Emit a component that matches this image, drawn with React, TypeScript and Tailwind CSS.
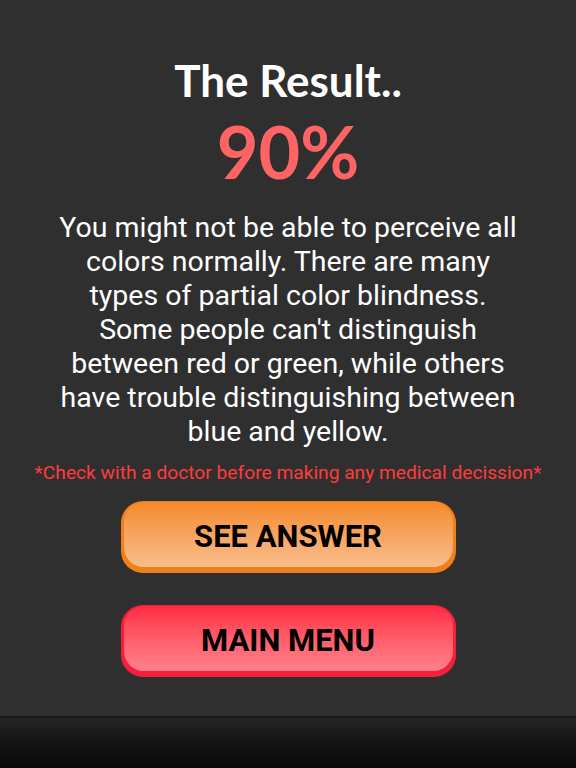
import React from "react";

const lines = [
  "You might not be able to perceive all",
  "colors normally. There are many",
  "types of partial color blindness.",
  "Some people can't distinguish",
  "between red or green, while others",
  "have trouble distinguishing between",
  "blue and yellow.",
];

export default function App() {
  return (
    <div className="w-[576px] h-[768px] flex flex-col bg-[#2f2f2f] overflow-hidden">
      <div className="flex-1 flex flex-col items-center">
        <h1
          className="mt-[54px] text-[44px] leading-[52px] font-bold text-white"
          style={{ fontFamily: "Lato, sans-serif" }}
        >
          The Result..
        </h1>
        <div
          className="mt-[5px] text-[72px] leading-[80px] font-bold text-[#ff6464]"
          style={{ fontFamily: "Lato, sans-serif" }}
        >
          90%
        </div>
        <p
          className="mt-[20px] flex flex-col items-center text-center text-[28.5px] leading-[34px] text-white"
          style={{ fontFamily: "Roboto, sans-serif" }}
        >
          {lines.map((l) => (
            <span key={l} className="whitespace-nowrap">
              {l}
            </span>
          ))}
        </p>
        <p
          className="mt-[12px] text-[19.2px] leading-[24px] text-[#ff3b3b] whitespace-nowrap"
          style={{ fontFamily: "Roboto, sans-serif" }}
        >
          *Check with a doctor before making any medical decission*
        </p>
        <div className="mt-[16px] w-[335px] h-[72px] rounded-[22px] bg-[#ef801c] pt-[1px] px-[3px] pb-[6px] flex">
          <div className="flex-1 rounded-[20px] bg-gradient-to-b from-[#f48a26] to-[#f9bd8a] flex items-center justify-center pt-[6px]">
            <span
              className="text-[31px] font-bold text-black"
              style={{ fontFamily: "Roboto, sans-serif" }}
            >
              SEE ANSWER
            </span>
          </div>
        </div>
        <div className="mt-[32px] w-[335px] h-[72px] rounded-[22px] bg-[#f51f3b] pt-[1px] px-[3px] pb-[6px] flex">
          <div className="flex-1 rounded-[20px] bg-gradient-to-b from-[#ff2742] to-[#ff808d] flex items-center justify-center pt-[6px]">
            <span
              className="text-[31px] font-bold text-black"
              style={{ fontFamily: "Roboto, sans-serif" }}
            >
              MAIN MENU
            </span>
          </div>
        </div>
      </div>
      <div className="h-[52px] border-t-2 border-[#161616] bg-gradient-to-b from-[#252525] via-[#141414] to-[#0a0a0a]" />
    </div>
  );
}
